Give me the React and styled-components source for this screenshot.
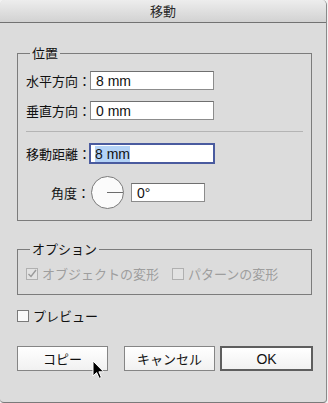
import React from 'react';
import styled, { createGlobalStyle } from 'styled-components';

const GlobalStyle = createGlobalStyle`
  html, body {
    margin: 0;
    padding: 0;
    background: #f2f2f2;
  }
  body {
    font-family: "Noto Sans CJK JP", "Liberation Sans", sans-serif;
    font-size: 13px;
    color: #111;
  }
`;

const Window = styled.div`
  position: relative;
  width: 326px;
  height: 402px;
  background: #dcdcdc;
  border-right: 1px solid #8a8a8a;
  border-bottom: 1px solid #7a7a7a;
  border-radius: 5px 5px 4px 4px;
  overflow: hidden;
`;

const TitleBar = styled.div`
  height: 22px;
  border-bottom: 1px solid #727272;
  background: linear-gradient(#ededed, #d2d2d2);
  display: flex;
  align-items: center;
  justify-content: center;
  font-size: 13px;
  color: #2a2a2a;
  line-height: 22px;
`;

const Body = styled.div`
  padding: 22px 0 0 17px;
  display: flex;
  flex-direction: column;
`;

const Group = styled.fieldset`
  box-sizing: border-box;
  width: 295px;
  margin: ${(p) => p.$top || 0}px 0 0 0;
  padding: ${(p) => p.$pad};
  border: 1px solid #7c7c7c;
  min-inline-size: 0;
`;

const Legend = styled.legend`
  margin-left: 4px;
  padding: 0 2px;
  font-size: 13px;
  line-height: 16px;
  height: 16px;
  color: #111;
`;

const Row = styled.div`
  display: flex;
  align-items: center;
  margin-top: ${(p) => p.$top || 0}px;
  height: ${(p) => p.$h || 19}px;
`;

const Label = styled.span`
  width: 64px;
  text-align: right;
  font-size: 13px;
  line-height: 16px;
  white-space: nowrap;
`;

const Field = styled.div`
  box-sizing: border-box;
  width: ${(p) => p.$w}px;
  height: ${(p) => (p.$focus ? 21 : 19)}px;
  margin-left: ${(p) => p.$ml || 0}px;
  background: #fff;
  border: ${(p) => (p.$focus ? '2px solid #4a5b9f' : '1px solid #8c8c8c')};
  border-top-color: ${(p) => (p.$focus ? '#4a5b9f' : '#6f6f6f')};
  display: flex;
  align-items: center;
  padding-left: ${(p) => (p.$focus ? 4 : 5)}px;
  font-family: "Liberation Sans", Arial, sans-serif;
  font-size: 14px;
  color: #111;
`;

const Selected = styled.span`
  background: #b4d3f7;
  line-height: 16px;
`;

const Separator = styled.div`
  height: 1px;
  margin-top: 11px;
  background: #b4b4b4;
`;

const Dial = styled.div`
  position: relative;
  box-sizing: border-box;
  width: 33px;
  height: 33px;
  margin-left: 1px;
  margin-right: 7px;
  border-radius: 50%;
  border: 1px solid #7a7a7a;
  background: #fbfbfb;
`;

const DialHand = styled.div`
  position: absolute;
  left: 15px;
  top: 15px;
  width: 16px;
  height: 1px;
  background: #6c6c6c;
`;

const CheckRow = styled.label`
  display: flex;
  align-items: center;
  gap: 4px;
  margin-right: ${(p) => p.$mr || 0}px;
  color: ${(p) => (p.$disabled ? '#9e9e9e' : '#111')};
  font-size: 13px;
  line-height: 16px;
  white-space: nowrap;
`;

const Box = styled.span`
  box-sizing: border-box;
  width: 12px;
  height: 12px;
  border: 1px solid ${(p) => (p.$disabled ? '#b0b0b0' : '#7a7a7a')};
  background: ${(p) => (p.$disabled ? '#e2e2e2' : '#fafafa')};
  display: flex;
  align-items: center;
  justify-content: center;
`;

const ButtonRow = styled.div`
  display: flex;
  align-items: center;
  margin-top: ${(p) => p.$top}px;
`;

const Button = styled.div`
  box-sizing: border-box;
  width: ${(p) => p.$w}px;
  height: 25px;
  margin-right: ${(p) => p.$mr || 0}px;
  border: ${(p) => (p.$default ? '2px solid #5e5e5e' : '1px solid #858585')};
  background: linear-gradient(#ffffff, #f1f1f1);
  display: flex;
  align-items: center;
  justify-content: center;
  font-size: 13px;
  font-family: ${(p) => (p.$latin ? '"Liberation Sans", Arial, sans-serif' : 'inherit')};
  ${(p) => p.$latin && 'font-size: 14px;'}
  color: #111;
`;

const Cursor = styled.svg`
  position: absolute;
  left: 92px;
  top: 360px;
`;

const Check = ({ checked, disabled }) => (
  <Box $disabled={disabled}>
    {checked && (
      <svg width="10" height="10" viewBox="0 0 10 10">
        <path d="M1.5 5 L4 7.5 L9 1" fill="none" stroke="#9a9a9a" strokeWidth="1.4" />
      </svg>
    )}
  </Box>
);

export default function App() {
  return (
    <>
      <GlobalStyle />
      <Window>
        <TitleBar>移動</TitleBar>
        <Body>
          <Group $pad="10px 8px 11px 8px">
            <Legend>位置</Legend>
            <Row>
              <Label>水平方向：</Label>
              <Field $w={124}>8 mm</Field>
            </Row>
            <Row $top={11}>
              <Label>垂直方向：</Label>
              <Field $w={124}>0 mm</Field>
            </Row>
            <Separator />
            <Row $top={11} $h={21}>
              <Label>移動距離：</Label>
              <Field $w={126} $ml={-1} $focus>
                <Selected>8 mm</Selected>
              </Field>
            </Row>
            <Row $top={12} $h={33}>
              <Label>角度：</Label>
              <Dial>
                <DialHand />
              </Dial>
              <Field $w={74}>0°</Field>
            </Row>
          </Group>

          <Group $top={20} $pad="9px 8px 12px 8px">
            <Legend>オプション</Legend>
            <Row $h={16}>
              <CheckRow $disabled $mr={13}>
                <Check checked disabled />
                オブジェクトの変形
              </CheckRow>
              <CheckRow $disabled>
                <Check disabled />
                パターンの変形
              </CheckRow>
            </Row>
          </Group>

          <Row $top={13} $h={16}>
            <CheckRow>
              <Check />
              プレビュー
            </CheckRow>
          </Row>

          <ButtonRow $top={22}>
            <Button $w={91} $mr={16}>コピー</Button>
            <Button $w={91} $mr={5}>キャンセル</Button>
            <Button $w={93} $default $latin>OK</Button>
          </ButtonRow>
        </Body>
        <Cursor width="13" height="20" viewBox="0 0 13 20">
          <path d="M1 1 L1 16 L4.6 12.6 L7.2 18.4 L9.4 17.4 L6.9 11.8 L11.6 11.8 Z" fill="#000" stroke="#fff" strokeWidth="1" strokeLinejoin="round" />
        </Cursor>
      </Window>
    </>
  );
}
